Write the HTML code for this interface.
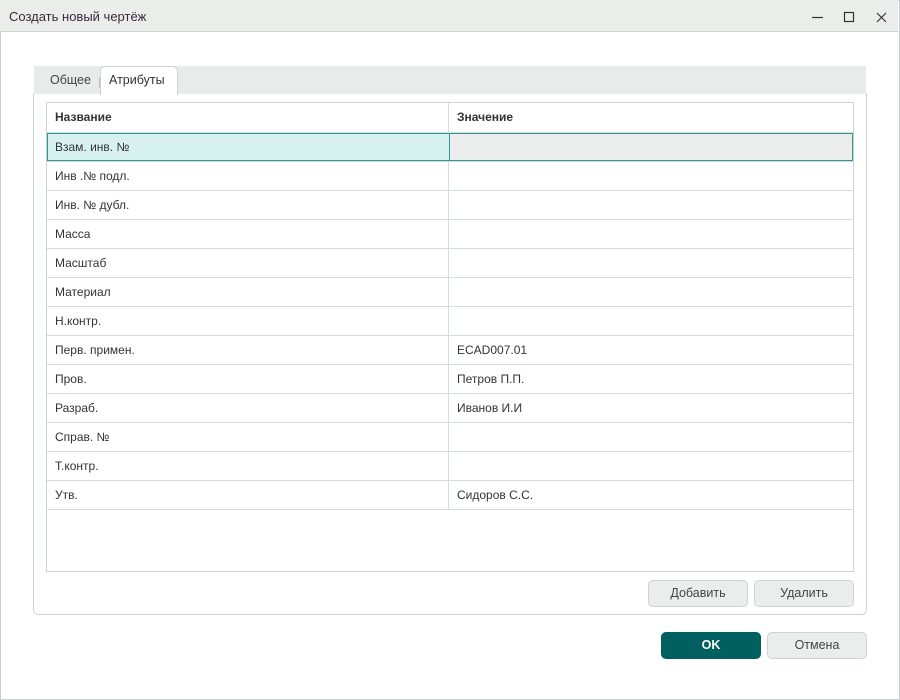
<!DOCTYPE html>
<html><head><meta charset="utf-8"><style>
*{box-sizing:border-box;margin:0;padding:0}
body{width:900px;height:700px;background:#fff;font-family:"Liberation Sans",sans-serif;font-size:12px;color:#333;position:relative;overflow:hidden}
.win{position:absolute;left:0;top:0;width:900px;height:700px;border:1px solid #c8d0cf}
.title{position:absolute;left:0;top:0;width:898px;height:32px;background:#ebedeb;border-bottom:1px solid #cdd3d2}
.title span{position:absolute;left:9px;top:9px;font-size:13px;color:#3a2a3a}
.strip{position:absolute;left:34px;top:66px;width:832px;height:28px;background:#e9ebea}
.tab1{position:absolute;left:50px;top:73px;font-size:12.5px;color:#444}
.tab2{position:absolute;left:100px;top:66px;width:78px;height:29px;background:#fff;border:1px solid #cdd3d2;border-bottom:none;border-radius:5px 5px 0 0;font-size:12.5px;padding:6px 0 0 8px;color:#333}
.sep{position:absolute;left:99px;top:78px;width:1px;height:10px;background:#bbb}
.panel{position:absolute;left:33px;top:93px;width:834px;height:522px;border:1px solid #cdd3d2;border-top:none;border-radius:0 0 5px 5px}
.tbl{position:absolute;left:46px;top:102px;width:808px;height:470px;border:1px solid #cdd3d2}
.row{position:absolute;left:0;width:806px;height:29px;border-bottom:1px solid #d6dcdb}
.c1,.c2{position:absolute;top:0;height:100%;padding:7px 0 0 8px}
.c1{left:0;width:402px;border-right:1px solid #d6dcdb}
.c2{left:402px;width:404px}
.hdr{font-weight:bold;color:#333}
.sel .c1{background:#d7f1f1;border:1px solid #2a9a94;border-right:none;padding:6px 0 0 7px}
.sel .c2{background:#ebedec;border:1px solid #2a9a94;padding:6px 0 0 7px}
.btn{position:absolute;height:27px;width:100px;border:1px solid #cdd3d2;border-radius:5px;background:#ebedec;text-align:center;line-height:25px;font-size:12.5px;color:#444}
.ok{background:#006060;border-color:#006060;color:#fff;font-weight:bold}
</style></head><body>
<div class="win"></div>
<div class="title"><span>Создать новый чертёж</span>
<svg style="position:absolute;left:810px;top:10px" width="80" height="14"><path d="M2 7.5H13" stroke="#333" stroke-width="1.2"/><rect x="34.5" y="2.5" width="9" height="9" fill="none" stroke="#333" stroke-width="1.2"/><path d="M67 3L76 12M76 3L67 12" stroke="#333" stroke-width="1.2"/></svg></div>
<div class="strip"></div>
<div class="tab1">Общее</div><div class="sep"></div>
<div class="tab2">Атрибуты</div>
<div class="panel"></div>
<div class="tbl">
<div class="row hdr" style="top:0;height:30px"><div class="c1">Название</div><div class="c2">Значение</div></div>
<div class="row sel" style="top:30px"><div class="c1">Взам. инв. №</div><div class="c2"></div></div>
<div class="row" style="top:59px"><div class="c1">Инв .№ подл.</div><div class="c2"></div></div>
<div class="row" style="top:88px"><div class="c1">Инв. № дубл.</div><div class="c2"></div></div>
<div class="row" style="top:117px"><div class="c1">Масса</div><div class="c2"></div></div>
<div class="row" style="top:146px"><div class="c1">Масштаб</div><div class="c2"></div></div>
<div class="row" style="top:175px"><div class="c1">Материал</div><div class="c2"></div></div>
<div class="row" style="top:204px"><div class="c1">Н.контр.</div><div class="c2"></div></div>
<div class="row" style="top:233px"><div class="c1">Перв. примен.</div><div class="c2">ECAD007.01</div></div>
<div class="row" style="top:262px"><div class="c1">Пров.</div><div class="c2">Петров П.П.</div></div>
<div class="row" style="top:291px"><div class="c1">Разраб.</div><div class="c2">Иванов И.И</div></div>
<div class="row" style="top:320px"><div class="c1">Справ. №</div><div class="c2"></div></div>
<div class="row" style="top:349px"><div class="c1">Т.контр.</div><div class="c2"></div></div>
<div class="row" style="top:378px"><div class="c1">Утв.</div><div class="c2">Сидоров С.С.</div></div>
</div>
<div class="btn" style="left:648px;top:580px">Добавить</div>
<div class="btn" style="left:754px;top:580px">Удалить</div>
<div class="btn ok" style="left:661px;top:632px">OK</div>
<div class="btn" style="left:767px;top:632px">Отмена</div>
</body></html>
